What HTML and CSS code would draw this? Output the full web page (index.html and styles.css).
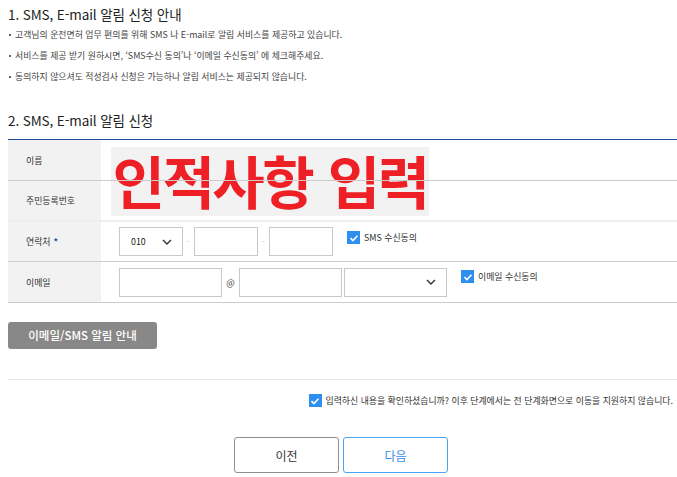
FILE: index.html
```html
<!DOCTYPE html>
<html lang="ko">
<head>
<meta charset="utf-8">
<link rel="stylesheet" href="styles.css">
</head>
<body>
<div class="page">
  <h2 class="title t1">1. SMS, E-mail 알림 신청 안내</h2>
  <ul class="notes">
    <li>고객님의 운전면허 업무 편의를 위해 SMS 나 E-mail로 알림 서비스를 제공하고 있습니다.</li>
    <li>서비스를 제공 받기 원하시면, ‘SMS수신 동의’나 ‘이메일 수신동의’ 에 체크해주세요.</li>
    <li>동의하지 않으셔도 적성검사 신청은 가능하나 알림 서비스는 제공되지 않습니다.</li>
  </ul>
  <h2 class="title t2">2. SMS, E-mail 알림 신청</h2>
  <div class="table">
    <div class="mask"><span>인적사항 입력</span></div>
    <div class="row r1"><div class="label">이름</div><div class="cell"></div></div>
    <div class="row r2"><div class="label">주민등록번호</div><div class="cell"></div></div>
    <div class="row r3">
      <div class="label">연락처 <b class="req">*</b></div>
      <div class="cell">
        <div class="select s-phone"><span>010</span><svg class="chev" viewBox="0 0 10 6" width="10" height="6"><path d="M1 1l4 4 4-4" fill="none" stroke="#333" stroke-width="1.4"/></svg></div>
        <span class="dash">-</span>
        <div class="input i-phone"></div>
        <span class="dash">-</span>
        <div class="input i-phone"></div>
        <label class="check c-sms"><i class="box"><svg viewBox="0 0 12 12" width="12" height="12"><path d="M2.5 6.2l2.4 2.3 4.6-4.8" fill="none" stroke="#fff" stroke-width="1.6"/></svg></i>SMS 수신동의</label>
      </div>
    </div>
    <div class="row r4">
      <div class="label">이메일</div>
      <div class="cell">
        <div class="input i-mail"></div>
        <span class="at">@</span>
        <div class="input i-mail"></div>
        <div class="select s-mail"><span></span><svg class="chev" viewBox="0 0 10 6" width="10" height="6"><path d="M1 1l4 4 4-4" fill="none" stroke="#333" stroke-width="1.4"/></svg></div>
        <label class="check c-mail"><i class="box"><svg viewBox="0 0 12 12" width="12" height="12"><path d="M2.5 6.2l2.4 2.3 4.6-4.8" fill="none" stroke="#fff" stroke-width="1.6"/></svg></i>이메일 수신동의</label>
      </div>
    </div>
  </div>
  <div class="guide"><button class="guide-btn">이메일/SMS 알림 안내</button></div>
  <div class="confirm">
    <label class="check"><i class="box"><svg viewBox="0 0 12 12" width="12" height="12"><path d="M2.5 6.2l2.4 2.3 4.6-4.8" fill="none" stroke="#fff" stroke-width="1.6"/></svg></i>입력하신 내용을 확인하셨습니까? 이후 단계에서는 전 단계화면으로 이동을 지원하지 않습니다.</label>
  </div>
  <div class="actions">
    <button class="btn prev">이전</button>
    <button class="btn next">다음</button>
  </div>
</div>
</body>
</html>
```
FILE: styles.css
```css
* { box-sizing: border-box; }
html, body { margin: 0; padding: 0; background: #fff; }
body {
  font-family: "Noto Sans CJK KR", "Noto Sans", sans-serif;
  color: #333;
  overflow: hidden;
}
.page { padding-left: 8px; width: 677px; }
.title {
  margin: 0;
  font-weight: 400;
  font-size: 13.5px;
  line-height: 20px;
  color: #222;
  letter-spacing: -0.1px;
}
.t1 { padding-top: 4px; }
.notes {
  list-style: none;
  margin: 0;
  padding: 0;
}
.notes li {
  position: relative;
  font-size: 8.9px;
  line-height: 21px;
  color: #444;
  padding-left: 7px;
}
.notes li::before {
  content: "";
  position: absolute;
  left: 1px;
  top: 10px;
  width: 2px;
  height: 2px;
  background: #666;
}
.t2 { margin-top: 23px; }
.table {
  position: relative;
  margin-top: 9px;
  border-top: 1px solid #1d4f9c;
}
.mask {
  position: absolute;
  z-index: 0;
  left: 103px;
  top: 7px;
  width: 318px;
  height: 69px;
  background: #f2f2f2;
  display: flex;
  align-items: center;
  justify-content: center;
}
.mask span {
  color: #ee2026;
  font-weight: 700;
  font-size: 57px;
  line-height: 1;
  letter-spacing: -2.5px;
  word-spacing: 2px;
  margin-top: -4px;
  white-space: nowrap;
}
.row {
  position: relative;
  z-index: 1;
  display: flex;
  border-bottom: 1px solid #ccc;
}
.r1 { height: 41px; }
.r2 { height: 41px; border-bottom: 2px solid #eee; }
.r3 { height: 40px; }
.r4 { height: 41px; }
.label {
  width: 93px;
  background: #f2f2f2;
  font-size: 8.9px;
  color: #333;
  padding-left: 18px;
  display: flex;
  align-items: center;
}
.req { color: #1d4f9c; font-weight: 700; margin-left: 3px; }
.cell {
  flex: 1;
  display: flex;
  align-items: center;
  padding-left: 18px;
}
.select, .input {
  height: 29px;
  border: 1px solid #c8c8c8;
  background: #fff;
}
.select {
  display: flex;
  align-items: center;
  justify-content: space-between;
  padding: 0 10px 0 11px;
  font-size: 8.8px;
  color: #222;
}
.s-phone { width: 64px; }
.i-phone { width: 64px; }
.dash { width: 11px; text-align: center; font-size: 8px; color: #bbb; }
.i-mail { width: 103px; }
.at { width: 17px; text-align: center; font-size: 9px; color: #444; }
.s-mail { width: 103px; margin-left: 2px; }
.check {
  display: flex;
  align-items: center;
  font-size: 8.9px;
  color: #333;
}
.box {
  width: 13px;
  height: 13px;
  background: #2e8ff0;
  display: flex;
  align-items: center;
  justify-content: center;
  margin-right: 4px;
}
.c-sms { align-self: flex-start; margin-top: 9px; margin-left: 14px; }
.c-mail { align-self: flex-start; margin-top: 8px; margin-left: 14px; }
.guide { padding-top: 18px; height: 77px; border-bottom: 1px solid #e8e8e8; }
.guide-btn {
  width: 149px;
  height: 27px;
  border: 0;
  border-radius: 3px;
  background: #888;
  color: #fff;
  font-family: inherit;
  font-weight: 500;
  font-size: 11.5px;
  padding: 0;
}
.confirm {
  display: flex;
  justify-content: flex-end;
  align-items: flex-start;
  padding: 14px 4px 0 0;
  height: 57px;
}
.confirm .box { margin-right: 4px; }
.actions {
  display: flex;
  justify-content: center;
  gap: 4px;
  padding-right: 3px;
}
.btn {
  width: 105px;
  height: 36px;
  background: #fff;
  border-radius: 3px;
  font-family: inherit;
  font-size: 12px;
  padding: 0;
}
.prev { border: 1px solid #8f8f8f; color: #333; }
.next { border: 1px solid #4da3f5; color: #3a8ee6; }
```
